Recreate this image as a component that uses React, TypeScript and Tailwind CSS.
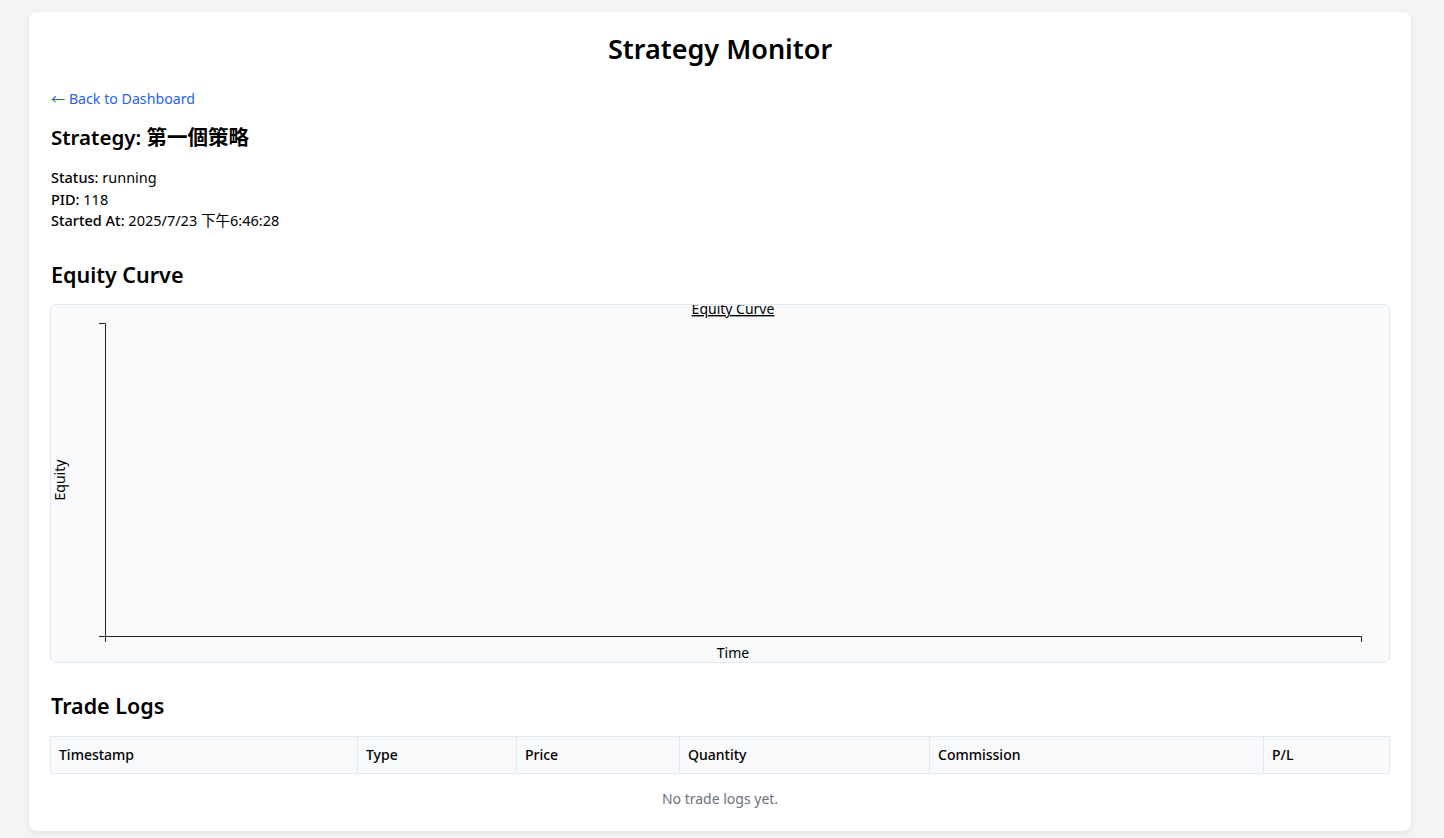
export default function App() {
  const columns = [
    { label: 'Timestamp', width: 'w-[307px]' },
    { label: 'Type', width: 'w-[159px]' },
    { label: 'Price', width: 'w-[163px]' },
    { label: 'Quantity', width: 'w-[250px]' },
    { label: 'Commission', width: 'w-[334px]' },
    { label: 'P/L', width: 'w-[126px]' },
  ];

  return (
    <div className="min-h-screen bg-[#f3f4f6] pt-[12px] pl-[29px] pr-[33px] pb-6 font-['Noto_Sans','Noto_Sans_CJK_TC',sans-serif] text-black">
      <div className="rounded-lg bg-white px-[21px] pt-5 pb-2 shadow-[0_2px_6px_rgba(0,0,0,0.08)]">
        {/* Header */}
        <h1 className="text-center text-[27px] leading-[34px] font-semibold">Strategy Monitor</h1>

        <a href="#" className="mt-[22px] block pl-px text-[14.2px] leading-[22px] text-[#2563eb]">
          ← Back to Dashboard
        </a>

        <h2 className="mt-[13px] pl-px text-[20.5px] leading-[28px] font-semibold">Strategy: 第一個策略</h2>

        <div className="mt-[16px] pl-px text-[14.5px] leading-[21.5px]">
          <div>
            <span className="font-medium">Status:</span> running
          </div>
          <div>
            <span className="font-medium">PID:</span> 118
          </div>
          <div>
            <span className="font-medium">Started At:</span> 2025/7/23 下午6:46:28
          </div>
        </div>

        {/* Equity Curve */}
        <h2 className="mt-[28px] pl-px text-[21.5px] leading-[30px] font-semibold">Equity Curve</h2>

        <div className="mt-[14px] h-[359px] overflow-hidden rounded-md border border-[#e2e8f0] bg-[#f8f9fa]">
          <svg viewBox="0 0 1338 357" className="block h-[357px] w-full" fontFamily="Noto Sans, sans-serif">
            <text x="682" y="9" textAnchor="middle" fontSize="14" textDecoration="underline">
              Equity Curve
            </text>
            <path d="M48 18.5 H54.5 V331.5 H1310.5 V337" stroke="#222" strokeWidth="1" fill="none" />
            <path d="M48 331.5 H54.5 V337" stroke="#222" strokeWidth="1" fill="none" />
            <text x="682" y="353" textAnchor="middle" fontSize="14">
              Time
            </text>
            <text x="14" y="175" textAnchor="middle" fontSize="14" transform="rotate(-90 14 175)">
              Equity
            </text>
          </svg>
        </div>

        {/* Trade Logs */}
        <h2 className="mt-[28px] pl-px text-[21.5px] leading-[30px] font-semibold">Trade Logs</h2>

        <table className="mt-[15px] w-full table-fixed border-collapse text-[14px]">
          <thead>
            <tr className="bg-[#f8f9fa]">
              {columns.map((col) => (
                <th
                  key={col.label}
                  className={`${col.width} h-[37px] border border-[#e2e8f0] px-2 text-left font-medium`}
                >
                  {col.label}
                </th>
              ))}
            </tr>
          </thead>
          <tbody>
            <tr>
              <td colSpan={6} className="h-[50px] text-center text-[14px] text-[#6b7280]">
                No trade logs yet.
              </td>
            </tr>
          </tbody>
        </table>
      </div>
    </div>
  );
}
